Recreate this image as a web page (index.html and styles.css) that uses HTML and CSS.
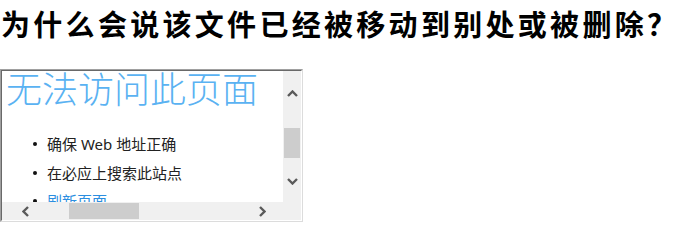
FILE: index.html
```html
<!DOCTYPE html>
<html lang="zh-CN">
<head>
<meta charset="utf-8">
<title>为什么会说该文件已经被移动到别处或被删除？</title>
<link rel="stylesheet" href="styles.css">
</head>
<body>
<h1 class="question">为什么会说该文件已经被移动到别处或被删除<span class="q-end">？</span></h1>
<div class="frame">
  <div class="frame-inner">
    <div class="viewport">
      <div class="page">
        <h2 class="page-title">无法访问此页面</h2>
        <ul class="tips">
          <li>确保 Web 地址正确</li>
          <li>在必应上搜索此站点</li>
          <li><a href="#">刷新页面</a></li>
        </ul>
      </div>
    </div>
    <div class="vbar">
      <div class="sb-btn sb-up">
        <svg width="11" height="7" viewBox="0 0 11 7"><polyline points="1,6 5.5,1.5 10,6" fill="none" stroke="#5a5a5a" stroke-width="2.4"/></svg>
      </div>
      <div class="vtrack"><div class="vthumb"></div></div>
      <div class="sb-btn sb-down">
        <svg width="11" height="7" viewBox="0 0 11 7"><polyline points="1,1 5.5,5.5 10,1" fill="none" stroke="#5a5a5a" stroke-width="2.4"/></svg>
      </div>
    </div>
    <div class="hbar">
      <div class="sb-btn sb-left">
        <svg width="7" height="11" viewBox="0 0 7 11"><polyline points="6,1 1.5,5.5 6,10" fill="none" stroke="#5a5a5a" stroke-width="2.4"/></svg>
      </div>
      <div class="htrack"><div class="hthumb"></div></div>
      <div class="sb-btn sb-right">
        <svg width="7" height="11" viewBox="0 0 7 11"><polyline points="1,1 5.5,5.5 1,10" fill="none" stroke="#5a5a5a" stroke-width="2.4"/></svg>
      </div>
    </div>
    <div class="corner"></div>
  </div>
</div>
</body>
</html>
```
FILE: styles.css
```css
body {
  margin: 0;
  background: #fff;
}

.question {
  margin: 7px 0 0;
  padding-left: 1px;
  font-family: "Noto Sans CJK SC", sans-serif;
  font-weight: 700;
  font-size: 29px;
  line-height: 32px;
  letter-spacing: 3.3px;
  color: #000;
  white-space: nowrap;
}

.q-end {
  letter-spacing: 0;
}

.frame {
  margin-top: 30px;
  width: 301px;
  border: 1px solid;
  border-color: #a0a0a0 #dcdcdc #dcdcdc #a0a0a0;
}

.frame-inner {
  display: grid;
  grid-template-columns: 281px 18px;
  grid-template-rows: 131px 18px;
  border: 1px solid;
  border-color: #696969 #fff #fff #696969;
}

.viewport {
  overflow: hidden;
  background: #fff;
}

.page {
  padding-left: 4px;
  width: 400px;
}

.page-title {
  margin: 0;
  font-family: "Noto Sans CJK SC", sans-serif;
  font-weight: 300;
  font-size: 36px;
  line-height: 32px;
  color: #5ab2f2;
  white-space: nowrap;
}

.tips {
  margin: 27px 0 0;
  padding: 0;
  list-style: none;
  font-family: "Noto Sans", "Noto Sans CJK SC", sans-serif;
  font-size: 15px;
  line-height: 28.5px;
  color: #222;
}

.tips li {
  display: flex;
  align-items: center;
  padding-left: 27px;
  white-space: nowrap;
}

.tips li::before {
  content: "";
  width: 4px;
  height: 4px;
  border-radius: 50%;
  background: #111;
  margin-right: 10px;
}

.tips a {
  color: #2b8ee0;
  text-decoration: none;
}

.vbar {
  display: flex;
  flex-direction: column;
  background: #f0f0f0;
}

.hbar {
  display: flex;
  background: #f0f0f0;
}

.corner {
  background: #f0f0f0;
}

.sb-btn {
  display: flex;
  align-items: center;
  justify-content: center;
  flex: none;
}

.sb-up { height: 45px; }
.sb-down { height: 42px; }
.sb-left { width: 47px; }
.sb-right { width: 42px; }

.vtrack {
  flex: 1;
}

.vthumb {
  margin: 12px 0 0 1px;
  width: 16px;
  height: 30px;
  background: #cdcdcd;
}

.htrack {
  flex: 1;
}

.hthumb {
  margin: 1px 0 0 20px;
  width: 70px;
  height: 16px;
  background: #cdcdcd;
}
```
